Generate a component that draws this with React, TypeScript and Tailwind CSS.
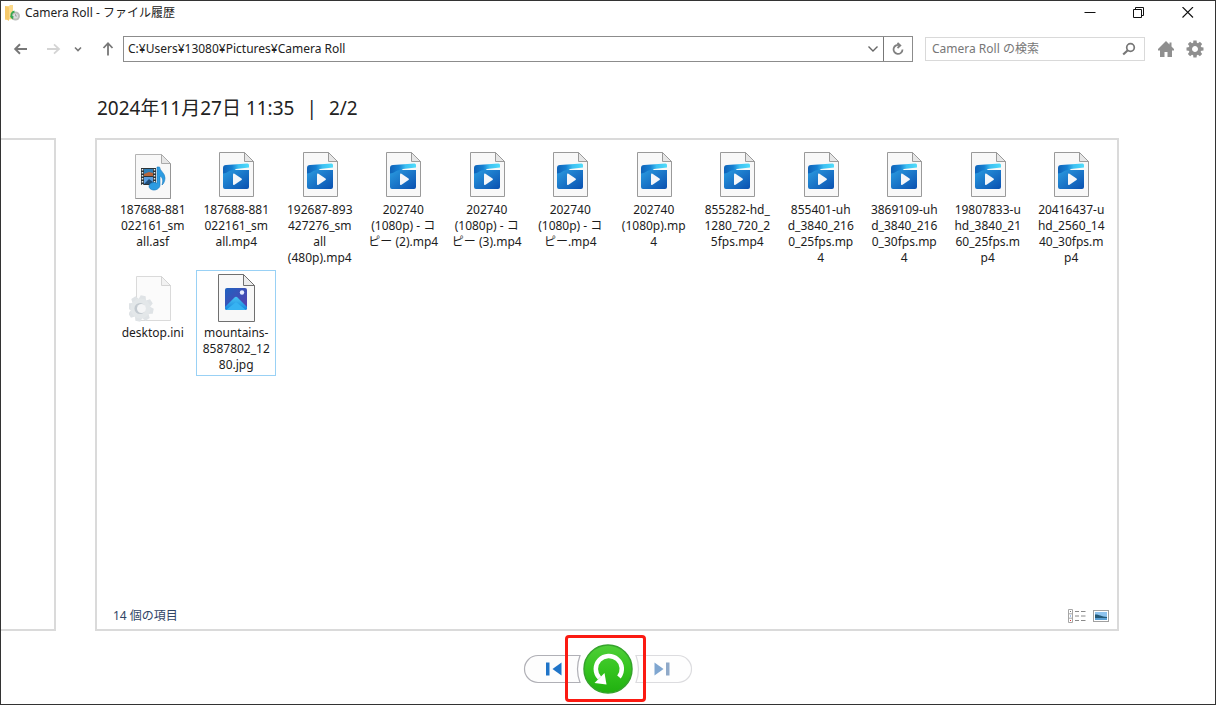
import React from "react";

type Kind = "asf" | "mp4" | "ini" | "jpg";

interface FileEntry {
  lines: string[];
  kind: Kind;
  selected?: boolean;
}

const files: FileEntry[] = [
  { kind: "asf", lines: ["187688-881", "022161_sm", "all.asf"] },
  { kind: "mp4", lines: ["187688-881", "022161_sm", "all.mp4"] },
  { kind: "mp4", lines: ["192687-893", "427276_sm", "all", "(480p).mp4"] },
  { kind: "mp4", lines: ["202740", "(1080p) - コ", "ピー (2).mp4"] },
  { kind: "mp4", lines: ["202740", "(1080p) - コ", "ピー (3).mp4"] },
  { kind: "mp4", lines: ["202740", "(1080p) - コ", "ピー.mp4"] },
  { kind: "mp4", lines: ["202740", "(1080p).mp", "4"] },
  { kind: "mp4", lines: ["855282-hd_", "1280_720_2", "5fps.mp4"] },
  { kind: "mp4", lines: ["855401-uh", "d_3840_216", "0_25fps.mp", "4"] },
  { kind: "mp4", lines: ["3869109-uh", "d_3840_216", "0_30fps.mp", "4"] },
  { kind: "mp4", lines: ["19807833-u", "hd_3840_21", "60_25fps.m", "p4"] },
  { kind: "mp4", lines: ["20416437-u", "hd_2560_14", "40_30fps.m", "p4"] },
  { kind: "ini", lines: ["desktop.ini"] },
  { kind: "jpg", lines: ["mountains-", "8587802_12", "80.jpg"], selected: true },
];

const GEAR_ANGLES = [0, 45, 90, 135, 180, 225, 270, 315];

function FileIcon({ kind }: { kind: Kind }) {
  return (
    <svg width="48" height="48" viewBox="0 0 48 48" aria-hidden="true" className="shrink-0">
      <defs>
        <linearGradient id="clip-body" x1="0" y1="0" x2="1" y2="1">
          <stop offset="0" stopColor="#2a9be0" />
          <stop offset="1" stopColor="#0a50b0" />
        </linearGradient>
        <linearGradient id="clip-top" x1="0" y1="0" x2="1" y2="0">
          <stop offset="0" stopColor="#0f62b8" />
          <stop offset="0.35" stopColor="#1580d2" />
          <stop offset="0.6" stopColor="#3cc0f2" />
          <stop offset="1" stopColor="#50dcfa" />
        </linearGradient>
        <linearGradient id="photo-sky" x1="0" y1="0" x2="1" y2="1">
          <stop offset="0" stopColor="#1f62c0" />
          <stop offset="1" stopColor="#5b3fae" />
        </linearGradient>
        <linearGradient id="photo-hill" x1="0" y1="0" x2="0" y2="1">
          <stop offset="0" stopColor="#48c4f4" />
          <stop offset="1" stopColor="#1583dd" />
        </linearGradient>
      </defs>
      {kind === "mp4" && (
        <>
          <path d="M7.500 1.500H32.500L41.500 10.500V45.500H7.500Z" fill="#f8f8f8" stroke="#9a9a9a" />
          <path d="M32.500 1.500V10.500H41.500Z" fill="#e6e6e6" stroke="#9a9a9a" strokeLinejoin="round" />
          <path d="M11 23V17C11 15 12 14.200 14 14L35.500 12.500Q37 12.500 37 14V16.500L24 18L18 23Z" fill="url(#clip-top)" />
          <path d="M11 22.500C15 22.500 17 19 22 19H37V36Q37 38 35 38H13Q11 38 11 36Z" fill="url(#clip-body)" />
          <path d="M21 23.500Q21 22 22.500 22.800L29.500 27.400Q30.500 28.200 29.500 29L22.500 33.700Q21 34.500 21 33Z" fill="#f4f6f9" />
        </>
      )}
      {kind === "asf" && (
        <>
          <path d="M6.500 3.500H32.500L41.500 12.500V47.500H6.500Z" fill="#f8f8f8" stroke="#b4b4b4" />
          <path d="M41.500 12.500V47.500H6.500" fill="none" stroke="#969696" />
          <path d="M32.500 3.500V12.500H41.500Z" fill="#e6e6e6" stroke="#aaa" />
          <rect x="12" y="17" width="15" height="17" fill="#2c3438" />
          <rect x="15" y="18" width="9" height="7" fill="#2f7fb8" />
          <path d="M15 23L20 21L24 22V25H15Z" fill="#b8653a" />
          <rect x="15" y="26" width="9" height="7" fill="#5c9fe0" />
          <path d="M15 33L20 28L24 31V33Z" fill="#1f4d78" />
          <path d="M13.500 18V34M25.500 18V34" stroke="#e6eef2" strokeWidth="1.500" strokeDasharray="1.500 1.500" />
          <path d="M28 16H30.500C31 20 36 22 36 27C36 30 34.500 33 33 34C34.500 29 33.500 26.500 31 25V34C31 37 27.500 39.500 24 39C19 38 19 33.500 22.500 32C24.500 31.200 27 31.500 28 32.500Z" fill="#2c9ce2" stroke="#1678c0" strokeWidth="0.600" />
        </>
      )}
      {kind === "ini" && (
        <>
          <path d="M7.500 2.500H32.500L41.500 11.500V46.500H7.500Z" fill="#fbfbfb" stroke="#dadada" />
          <path d="M32.500 2.500V11.500H41.500Z" fill="#f2f2f2" stroke="#d4d4d4" />
          <g transform="translate(11.500 34.500)">
            {GEAR_ANGLES.map((a) => (
              <path key={a} d="M-4 -8L-2.500 -13H2.500L4 -8Z" fill="#dfe3e6" transform={`rotate(${a + 12})`} />
            ))}
            <circle r="10" fill="#e3e7e9" />
            <circle cx="-0.500" r="5.500" fill="#c3cad0" />
            <circle cx="1" r="4.500" fill="#f4f5f6" />
          </g>
        </>
      )}
      {kind === "jpg" && (
        <>
          <path d="M6.500 0.500H31.500L42.500 11.500V47.500H6.500Z" fill="#f8f8f8" stroke="#707070" />
          <path d="M31.500 0.500V11.500H42.500Z" fill="#ececec" stroke="#707070" />
          <rect x="13" y="14" width="22" height="22" rx="2" fill="url(#photo-sky)" />
          <path d="M13 33L22.500 23.500Q24 22 25.500 23.500L35 33V34Q35 36 33 36H15Q13 36 13 34Z" fill="url(#photo-hill)" />
          <path d="M14 36L24 28L34 36Z" fill="#36b2f2" />
          <circle cx="30" cy="18.500" r="2.200" fill="#e8edff" />
        </>
      )}
    </svg>
  );
}

function FileTile({ file }: { file: FileEntry }) {
  return (
    <li
      className={
        file.selected
          ? "flex w-20 flex-col items-center justify-self-center self-start border border-[#99d1f5] pt-[3px] pb-0.5"
          : "flex w-20 flex-col items-center justify-self-center self-start border border-transparent pt-[3px] pb-0.5"
      }
    >
      <FileIcon kind={file.kind} />
      <span className="mt-[3px] text-center text-[12px] leading-4 whitespace-pre text-[#1c1c1c]">
        {file.lines.join("\n")}
      </span>
    </li>
  );
}

function TitleBar() {
  return (
    <header className="flex h-6 items-center pl-1 pr-[3px]">
      <svg width="16" height="16" viewBox="0 0 16 16" aria-hidden="true">
        <path d="M0 1H4L5 0H8V14L0 15Z" fill="#fbd98a" />
        <path d="M0 1L4 2.500V16L0 13.500Z" fill="#f6c96a" />
        <circle cx="10.500" cy="11" r="4.500" fill="#b9bdb9" />
        <circle cx="10.500" cy="11" r="2.600" fill="#d9dddd" />
        <path d="M10.500 11V9M10.500 11H12" stroke="#999" strokeWidth="0.800" />
        <path d="M9.500 6.500C6.500 7 5.500 10 7 13" fill="none" stroke="#35a853" strokeWidth="1.800" />
        <path d="M4.800 11.500L8.500 11L8 14.500Z" fill="#35a853" />
      </svg>
      <h1 className="ml-1 flex-1 text-[12px] leading-4 font-normal text-[#222]">Camera Roll - ファイル履歴</h1>
      <button type="button" aria-label="最小化" className="flex h-[22px] w-[49px] items-center justify-center">
        <svg width="12" height="12" viewBox="0 0 12 12" fill="none" stroke="#111">
          <path d="M0.500 5.500H11.500" />
        </svg>
      </button>
      <button type="button" aria-label="元に戻す (縮小)" className="flex h-[22px] w-[49px] items-center justify-center">
        <svg width="12" height="12" viewBox="0 0 12 12" fill="none" stroke="#111">
          <path d="M0.500 2.500H8.500V10.500H0.500Z" />
          <path d="M2.500 2.500V0.500H10.500V8.500H8.500" />
        </svg>
      </button>
      <button type="button" aria-label="閉じる" className="flex h-[22px] w-[49px] items-center justify-center">
        <svg width="12" height="12" viewBox="0 0 12 12" fill="none" stroke="#111" strokeWidth="1.100">
          <path d="M0.500 0L11 10.500M11 0L0.500 10.500" />
        </svg>
      </button>
    </header>
  );
}

function Toolbar() {
  return (
    <nav className="mt-[11px] flex items-center pl-3 pr-[11px]">
      <button type="button" aria-label="戻る" className="mr-[17px]">
        <svg width="16" height="14" viewBox="0 0 16 14" fill="none" stroke="#777" strokeWidth="1.900">
          <path d="M14 7H2.500M7 2.300L2.200 7L7 11.700" />
        </svg>
      </button>
      <button type="button" aria-label="進む" className="mr-3">
        <svg width="16" height="14" viewBox="0 0 16 14" fill="none" stroke="#d4d4d4" strokeWidth="1.800">
          <path d="M1 7H13M8 2.300L13 7L8 11.700" />
        </svg>
      </button>
      <button type="button" aria-label="最近表示した場所" className="mr-[19px]">
        <svg width="8" height="8" viewBox="0 0 8 8" fill="none" stroke="#777" strokeWidth="1.600">
          <path d="M1 2.500L4 5.500L7 2.500" />
        </svg>
      </button>
      <button type="button" aria-label="上へ" className="mr-2">
        <svg width="14" height="16" viewBox="0 0 14 16" fill="none" stroke="#777" strokeWidth="1.800">
          <path d="M7 14.500V2.500M2.500 7L7 2.200L11.500 7" />
        </svg>
      </button>
      <div className="flex h-[26px] flex-1 border border-[#8c8c8c]">
        <input
          type="text"
          aria-label="アドレス"
          defaultValue="C:¥Users¥13080¥Pictures¥Camera Roll"
          className="min-w-0 flex-1 bg-transparent px-1 text-[12px] text-[#222] outline-none"
        />
        <button type="button" aria-label="以前の場所" className="flex w-5 items-center justify-center">
          <svg width="10" height="10" viewBox="0 0 10 10" fill="none" stroke="#666" strokeWidth="1.400">
            <path d="M0.500 2.500L5 7L9.500 2.500" />
          </svg>
        </button>
        <button
          type="button"
          aria-label="最新の情報に更新"
          className="flex w-[29px] items-center justify-center border-l border-[#777]"
        >
          <svg width="14" height="14" viewBox="0 0 14 14" fill="none" stroke="#808080" strokeWidth="1.800">
            <path d="M8.800 3.300A4.500 4.500 0 1 0 11.500 7.500" />
            <path d="M6.500 0.800L9.300 3.500L6.500 6" />
          </svg>
        </button>
      </div>
      <div className="ml-3 flex h-6 w-[220px] items-center border border-[#d9d9d9] pr-2">
        <input
          type="search"
          aria-label="Camera Roll の検索"
          placeholder="Camera Roll の検索"
          className="min-w-0 flex-1 bg-transparent pl-1.5 text-[12px] outline-none placeholder:text-[#777]"
        />
        <svg width="14" height="14" viewBox="0 0 14 14" fill="none" stroke="#777" aria-hidden="true">
          <circle cx="8.500" cy="5.500" r="3.800" strokeWidth="1.700" />
          <path d="M5.800 8.200L1.200 12.500" strokeWidth="2.200" />
        </svg>
      </div>
      <button type="button" aria-label="ホーム" className="ml-[13px]">
        <svg width="16" height="16" viewBox="0 0 16 16" fill="#8f8f8f">
          <path d="M8 0L11.500 3.500V1.500H13.500V5.500L16 8V9.500H14V16H9.500V11H6.500V16H2V9.500H0V8Z" />
        </svg>
      </button>
      <button type="button" aria-label="設定" className="ml-3">
        <svg width="18" height="18" viewBox="-9 -9 18 18" fill="#8f8f8f">
          {GEAR_ANGLES.map((a) => (
            <path key={a} d="M-2 -5L-1.600 -8.500H1.600L2 -5Z" transform={`rotate(${a})`} />
          ))}
          <circle r="4.700" fill="none" stroke="#8f8f8f" strokeWidth="3.400" />
        </svg>
      </button>
    </nav>
  );
}

function StatusBar() {
  return (
    <footer className="flex items-center justify-between pb-[5px] pl-4 pr-2">
      <span className="text-[12px] leading-4 text-[#2f4566]">14 個の項目</span>
      <div className="flex items-center gap-[7px]">
        <button type="button" aria-label="詳細表示">
          <svg width="18" height="14" viewBox="0 0 18 14" fill="none">
            <path d="M0.500 0.500H4.500V13.500H0.500ZM0.500 4.800H4.500M0.500 9.200H4.500" stroke="#a6a6a6" />
            <path d="M2 2.500H3" stroke="#777" />
            <path d="M2 7H3" stroke="#4a86d8" />
            <path d="M2 11.500H3" stroke="#d83a3a" />
            <path d="M7 2.500H11M13 2.500H17.500M7 7H11M13 7H17.500M7 11.500H11M13 11.500H17.500" stroke="#8a8a8a" />
          </svg>
        </button>
        <button type="button" aria-label="大アイコン表示">
          <svg width="16" height="12" viewBox="0 0 16 12">
            <rect x="0.500" y="0.500" width="15" height="11" fill="#fff" stroke="#a0a0a0" />
            <rect x="2" y="2" width="12" height="8" fill="#8ec3ee" />
            <path d="M2 4.500C5 4 8 6.500 14 7V8H2Z" fill="#245a78" />
            <path d="M2 8H14V10H2Z" fill="#5a9fd4" />
          </svg>
        </button>
      </div>
    </footer>
  );
}

function Controls() {
  return (
    <div className="flex h-[73px] items-center justify-center pt-0.5">
      <button type="button" aria-label="前のバージョン">
        <svg width="59" height="30" viewBox="0 0 59 30" fill="none">
          <path d="M57 1.500H15A13.500 13.500 0 0 0 15 28.500H57Q52 15 57 1.500Z" fill="#fdfdfd" stroke="#b0b0b6" strokeWidth="1.200" />
          <path d="M23 8.500H26.500V21.500H23Z" fill="#1f74c8" />
          <path d="M38.500 8.500V21.500L29.500 15Z" fill="#1f74c8" />
        </svg>
      </button>
      <div className="relative mx-px flex">
        <button type="button" aria-label="元の場所に復元します。">
          <svg width="50" height="50" viewBox="0 0 50 50">
            <defs>
              <linearGradient id="restore-fill" x1="0" y1="0" x2="0" y2="1">
                <stop offset="0" stopColor="#4fcf38" />
                <stop offset="0.500" stopColor="#35c41f" />
                <stop offset="1" stopColor="#20b010" />
              </linearGradient>
            </defs>
            <circle cx="25" cy="25" r="24" fill="url(#restore-fill)" stroke="#35a32c" strokeWidth="1.500" />
            <path d="M36 33A13 13 0 1 0 16.500 34" fill="none" stroke="#fff" strokeWidth="4.500" />
            <path d="M11.500 39L23.500 40.500L21.500 29Z" fill="#fff" />
          </svg>
        </button>
        <span className="pointer-events-none absolute -top-[9px] -right-[13px] -bottom-2 -left-[18px] rounded-sm border-3 border-[#fb1a12]" />
      </div>
      <button type="button" aria-label="次のバージョン">
        <svg width="59" height="30" viewBox="0 0 59 30" fill="none">
          <path d="M2 1.500H44A13.500 13.500 0 0 1 44 28.500H2Q7 15 2 1.500Z" fill="#fefefe" stroke="#dcdcdf" strokeWidth="1.200" />
          <path d="M20.500 8.500V21.500L29.500 15Z" fill="#7fa6d0" />
          <path d="M32 8.500H35.500V21.500H32Z" fill="#8fa9c8" />
        </svg>
      </button>
    </div>
  );
}

export default function App() {
  return (
    <div className="flex min-h-screen flex-col border border-[#333] bg-white font-['Noto_Sans','Noto_Sans_CJK_JP',sans-serif]">
      <TitleBar />
      <Toolbar />
      <h2 className="mt-[34px] ml-24 flex gap-3 text-[19px] leading-6 font-normal text-[#222]">
        <span>2024年11月27日 11:35</span>
        <span>|</span>
        <span>2/2</span>
      </h2>
      <main className="mt-[18px] flex flex-1 gap-[39px] pr-24">
        <section aria-label="前のバージョン" className="w-[55px] border-2 border-l-0 border-[#dadada]" />
        <section aria-label="ファイル" className="flex flex-1 flex-col border-2 border-[#dadada]">
          <ul className="grid flex-1 grid-cols-12 content-start gap-y-px pt-[7px] pr-1 pl-[14px]">
            {files.map((f) => (
              <FileTile key={f.lines.join("")} file={f} />
            ))}
          </ul>
          <StatusBar />
        </section>
      </main>
      <Controls />
    </div>
  );
}
